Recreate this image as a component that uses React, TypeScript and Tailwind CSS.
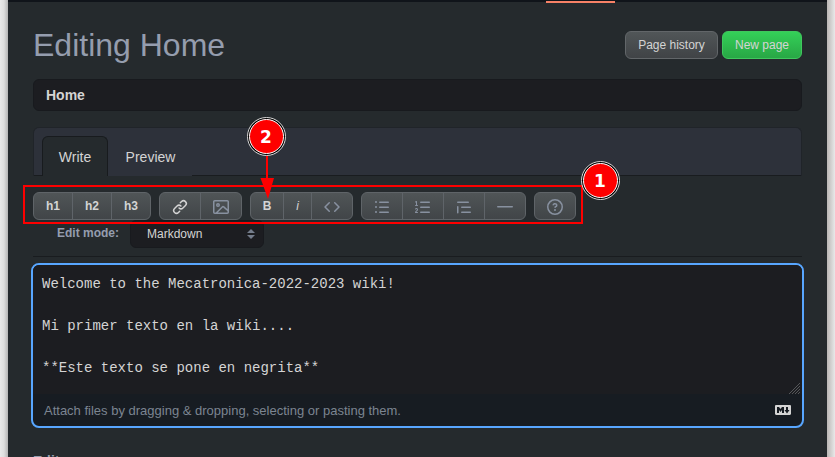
import type { ReactNode } from "react";

const icons = {
  link: "m7.775 3.275 1.25-1.25a3.5 3.5 0 1 1 4.95 4.95l-2.5 2.5a3.5 3.5 0 0 1-4.95 0 .751.751 0 0 1 .018-1.042.751.751 0 0 1 1.042-.018 1.998 1.998 0 0 0 2.83 0l2.5-2.5a2.002 2.002 0 0 0-2.83-2.83l-1.25 1.25a.751.751 0 0 1-1.042-.018.751.751 0 0 1-.018-1.042Zm-4.69 9.64a1.998 1.998 0 0 0 2.83 0l1.25-1.25a.751.751 0 0 1 1.042.018.751.751 0 0 1 .018 1.042l-1.25 1.25a3.5 3.5 0 1 1-4.95-4.95l2.5-2.5a3.5 3.5 0 0 1 4.95 0 .751.751 0 0 1-.018 1.042.751.751 0 0 1-1.042.018 1.998 1.998 0 0 0-2.83 0l-2.5 2.5a1.998 1.998 0 0 0 0 2.83Z",
  image: "M16 13.25A1.75 1.75 0 0 1 14.25 15H1.75A1.75 1.75 0 0 1 0 13.25V2.75C0 1.784.784 1 1.75 1h12.5c.966 0 1.75.784 1.75 1.75ZM1.75 2.5a.25.25 0 0 0-.25.25v10.5c0 .138.112.25.25.25h.94l.03-.03 6.077-6.078a1.75 1.75 0 0 1 2.412-.06L14.5 10.31V2.75a.25.25 0 0 0-.25-.25Zm12.5 11a.25.25 0 0 0 .25-.25v-.917l-4.298-3.889a.25.25 0 0 0-.344.009L4.81 13.5ZM7 6a2 2 0 1 1-3.999.001A2 2 0 0 1 7 6ZM5.5 6a.5.5 0 1 0-1 0 .5.5 0 0 0 1 0Z",
  code: "m11.28 3.22 4.25 4.25a.75.75 0 0 1 0 1.06l-4.25 4.25a.749.749 0 0 1-1.275-.326.749.749 0 0 1 .215-.734L13.94 8l-3.72-3.72a.749.749 0 0 1 .326-1.275.749.749 0 0 1 .734.215Zm-6.56 0a.751.751 0 0 1 1.042.018.751.751 0 0 1 .018 1.042L2.06 8l3.72 3.72a.749.749 0 0 1-.326 1.275.749.749 0 0 1-.734-.215L.47 8.53a.75.75 0 0 1 0-1.06Z",
  list: "M5.75 2.5h8.5a.75.75 0 0 1 0 1.5h-8.5a.75.75 0 0 1 0-1.5Zm0 5h8.5a.75.75 0 0 1 0 1.5h-8.5a.75.75 0 0 1 0-1.5Zm0 5h8.5a.75.75 0 0 1 0 1.5h-8.5a.75.75 0 0 1 0-1.5ZM2 14a1 1 0 1 1 0-2 1 1 0 0 1 0 2Zm1-6a1 1 0 1 1-2 0 1 1 0 0 1 2 0ZM2 4a1 1 0 1 1 0-2 1 1 0 0 1 0 2Z",
  ordered: "M5 3.25a.75.75 0 0 1 .75-.75h8.5a.75.75 0 0 1 0 1.5h-8.5A.75.75 0 0 1 5 3.25Zm0 5a.75.75 0 0 1 .75-.75h8.5a.75.75 0 0 1 0 1.5h-8.5A.75.75 0 0 1 5 8.25Zm0 5a.75.75 0 0 1 .75-.75h8.5a.75.75 0 0 1 0 1.5h-8.5a.75.75 0 0 1-.75-.75ZM.924 10.32a.5.5 0 0 1-.851-.525l.001-.001.001-.002.002-.004.007-.011c.097-.144.215-.273.348-.384.228-.19.588-.392 1.068-.392.468 0 .858.181 1.126.484.259.294.377.673.377 1.038 0 .987-.686 1.495-1.156 1.845l-.047.035c-.303.225-.522.4-.654.597h1.357a.5.5 0 0 1 0 1H.5a.5.5 0 0 1-.5-.5c0-1.005.692-1.52 1.167-1.875l.035-.025c.531-.396.8-.625.8-1.078a.57.57 0 0 0-.128-.376C1.806 10.068 1.695 10 1.5 10a.658.658 0 0 0-.429.163.835.835 0 0 0-.144.153ZM2.003 2.5V6h.503a.5.5 0 0 1 0 1H.5a.5.5 0 0 1 0-1h.503V3.308l-.28.14a.5.5 0 0 1-.446-.895l1.003-.5a.5.5 0 0 1 .723.447Z",
  quote: "M1.75 2.5h10.5a.75.75 0 0 1 0 1.5H1.75a.75.75 0 0 1 0-1.5Zm4 5h8.5a.75.75 0 0 1 0 1.5h-8.5a.75.75 0 0 1 0-1.5Zm0 5h8.5a.75.75 0 0 1 0 1.5h-8.5a.75.75 0 0 1 0-1.5ZM2.5 7.75v6a.75.75 0 0 1-1.5 0v-6a.75.75 0 0 1 1.5 0Z",
  rule: "M0 7.75A.75.75 0 0 1 .75 7h14.5a.75.75 0 0 1 0 1.5H.75A.75.75 0 0 1 0 7.75Z",
  question: "M0 8a8 8 0 1 1 16 0A8 8 0 0 1 0 8Zm8-6.5a6.5 6.5 0 1 0 0 13 6.5 6.5 0 0 0 0-13ZM6.92 6.085h.001a.749.749 0 1 1-1.342-.67c.169-.339.436-.701.849-.977C6.845 4.16 7.369 4 8 4a2.756 2.756 0 0 1 1.637.525c.503.377.863.965.863 1.725 0 .448-.115.83-.329 1.15-.205.307-.47.513-.692.662-.109.072-.22.138-.313.195l-.006.004a6.24 6.24 0 0 0-.26.16.952.952 0 0 0-.276.245.75.75 0 0 1-1.248-.832c.184-.264.42-.489.692-.661.103-.067.207-.132.313-.195l.007-.004c.1-.061.182-.11.258-.161a.969.969 0 0 0 .277-.245C8.96 6.514 9 6.427 9 6.25a.612.612 0 0 0-.262-.525A1.27 1.27 0 0 0 8 5.5c-.369 0-.595.09-.74.187a1.01 1.01 0 0 0-.34.398ZM9 11a1 1 0 1 1-2 0 1 1 0 0 1 2 0Z",
  markdown: "M14.85 3c.63 0 1.15.52 1.14 1.15v7.7c0 .63-.51 1.15-1.15 1.15H1.15C.52 13 0 12.48 0 11.84V4.15C0 3.52.52 3 1.15 3ZM9 11V5H7L5.5 7 4 5H2v6h2V8l1.5 1.92L7 8v3Zm2.99.5L14.5 8H13V5h-2v3H9.5Z",
};

function Icon({ name, className = "text-[#8891a0]" }: { name: keyof typeof icons; className?: string }) {
  return (
    <svg viewBox="0 0 16 16" className={`size-4 shrink-0 fill-current ${className}`}>
      <path d={icons[name]} />
    </svg>
  );
}

function Group({ children }: { children: ReactNode }) {
  return (
    <div className="flex h-7 divide-x divide-[#5f6469] rounded-md border border-[#5f6468] bg-linear-to-b from-[#505557] to-[#414548] text-xs font-bold text-[#d4d4d4]">
      {children}
    </div>
  );
}

function Tool({ children, className = "px-3 pt-0.5" }: { children: ReactNode; className?: string }) {
  return <button className={`box-content flex items-center justify-center ${className}`}>{children}</button>;
}

function Badge({ n, className }: { n: number; className: string }) {
  return (
    <div className={`absolute size-[39px] rounded-full border border-[#d8d8d8] bg-black p-px ${className}`}>
      <div className="flex size-full items-center justify-center rounded-full border border-white bg-[#fe0000] pt-px font-['DejaVu_Sans',sans-serif] text-[17px] leading-none font-bold text-white">
        {n}
      </div>
    </div>
  );
}

export default function App() {
  return (
    <div className="relative flex h-[457px] w-[835px] overflow-hidden bg-[#252a2d] font-['Liberation_Sans',Arial,sans-serif] text-[#d4d4d4]">
      <div className="w-2 shrink-0 bg-linear-to-r from-[#e9e9e9] via-[#dedede] to-[#b4b4b4]" />
      <div className="flex min-w-0 flex-1 flex-col">
        <div className="flex h-[3px] shrink-0 items-start">
          <div className="h-0.5 w-[538px] bg-[#10141a]" />
          <div className="h-[3px] w-[69px] border-t border-[#10141a] bg-[#f78166]" />
          <div className="h-0.5 flex-1 bg-[#10141a]" />
        </div>
        <main className="flex flex-1 flex-col pr-[25px] pl-[25px]">
          <header className="mt-7 flex h-7 items-center justify-between">
            <h1 className="text-[32px] leading-7 text-[#959dae]">Editing Home</h1>
            <div className="flex gap-1 text-xs">
              <button className="h-7 w-[93px] rounded-md border border-[#626669] bg-linear-to-b from-[#515658] to-[#404346]">
                Page history
              </button>
              <button className="h-7 w-20 rounded-md border border-[#3fc75d] bg-linear-to-b from-[#34d058] to-[#28a745]">
                New page
              </button>
            </div>
          </header>
          <div className="mt-5 flex h-8 shrink-0 items-center rounded-md border border-[#181a1e] bg-[#1c1d21] px-3 text-sm font-bold">
            Home
          </div>
          <nav className="mt-4 flex h-[49px] shrink-0 items-end rounded-t-md border border-[#202429] border-b-0 bg-[#2d313a] text-sm">
            <div className="h-full w-2 border-b border-[#191c1f]" />
            <div className="flex h-10 w-[66px] items-center justify-center rounded-t-md border border-b-0 border-[#181b1e] bg-[#252a2d] pt-px">
              Write
            </div>
            <div className="flex h-10 w-[84px] items-center justify-center pt-px pl-px">Preview</div>
            <div className="h-full flex-1 border-b border-[#191c1f]" />
          </nav>
          <div className="mt-4 flex shrink-0 gap-2">
            <Group>
              <Tool className="w-3.5 px-3">h1</Tool>
              <Tool className="w-3.5 px-3">h2</Tool>
              <Tool className="w-3.5 px-3">h3</Tool>
            </Group>
            <Group>
              <Tool><Icon name="link" className="text-[#d4d4d4]" /></Tool>
              <Tool><Icon name="image" /></Tool>
            </Group>
            <Group>
              <Tool className="w-2 px-3">B</Tool>
              <Tool className="w-[3px] px-3 font-normal italic">i</Tool>
              <Tool><Icon name="code" /></Tool>
            </Group>
            <Group>
              <Tool><Icon name="list" /></Tool>
              <Tool><Icon name="ordered" /></Tool>
              <Tool><Icon name="quote" /></Tool>
              <Tool><Icon name="rule" /></Tool>
            </Group>
            <Group>
              <Tool><Icon name="question" /></Tool>
            </Group>
          </div>
          <div className="flex h-[37px] shrink-0 items-start border-b border-[#191c1f] pl-6">
            <span className="w-[73px] pt-[5px] text-xs font-bold text-[#959dae]">Edit mode:</span>
            <div className="flex h-7 w-[134px] items-center justify-between rounded-md border border-[#181a1e] bg-[#1c1d21] pr-2 pl-4 text-xs">
              Markdown
              <svg viewBox="0 0 8 10" className="h-2.5 w-2 fill-[#747d8c]">
                <path d="M4 0 8 4H0ZM0 6H8L4 10Z" />
              </svg>
            </div>
          </div>
          <section className="-mx-0.5 mt-1.5 flex h-[165px] shrink-0 flex-col overflow-hidden rounded-lg border-2 border-[#58a6ff] bg-[#171c22]">
            <div className="relative h-[129px] shrink-0 bg-[#1c1d21] px-[9px] pt-[9px] font-['Liberation_Mono',monospace] text-sm leading-[21px] whitespace-pre">
              {"Welcome to the Mecatronica-2022-2023 wiki!\n\nMi primer texto en la wiki....\n\n**Este texto se pone en negrita**"}
              <svg viewBox="0 0 11 11" className="absolute right-0.5 bottom-0 size-[11px] stroke-[#64666a]">
                <path d="M0 11 11 0M3 11 11 3M6 11 11 6M9 11 11 9" strokeWidth=".8" />
              </svg>
            </div>
            <footer className="flex flex-1 items-center justify-between px-[11px] text-[13px] text-[#7c8591]">
              <span className="pt-px">Attach files by dragging &amp; dropping, selecting or pasting them.</span>
              <Icon name="markdown" className="mb-px text-[#d4d4d4]" />
            </footer>
          </section>
          <div className="mt-[23px] h-[21px] shrink-0 text-sm leading-[21px] font-bold whitespace-nowrap text-[#959dae]">Edit</div>
        </main>
      </div>
      <div className="w-2 shrink-0 bg-linear-to-r from-[#bbb7b5] to-[#e9e9e9]" />

      {/* Callouts over the toolbar */}
      <div className="absolute top-[185px] left-[23px] h-[39px] w-[560px] border-2 border-[#fe0000]" />
      <Badge n={1} className="top-[161px] left-[580.5px]" />
      <svg viewBox="0 0 14 46" className="absolute top-[154px] left-[260px] h-[46px] w-3.5 fill-[#fe0000]">
        <path d="M6 0H8V24H14L8 45 0.5 24H6Z" />
      </svg>
      <Badge n={2} className="top-[117px] left-[246.5px]" />
    </div>
  );
}
